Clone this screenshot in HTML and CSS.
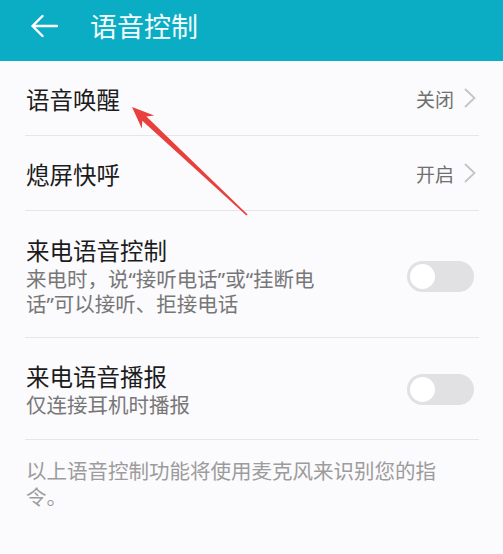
FILE: index.html
```html
<!DOCTYPE html>
<html lang="zh-CN">
<head>
<meta charset="utf-8">
<link rel="stylesheet" href="styles.css">
</head>
<body>
<header class="appbar">
  <svg class="back" width="28" height="24" viewBox="0 0 28 24"><path d="M27 12H2.5M12.5 2L2.5 12l10 10" fill="none" stroke="#fff" stroke-width="2.4" stroke-linecap="round" stroke-linejoin="round"/></svg>
  <h1 class="title">语音控制</h1>
</header>
<main class="list">
  <div class="row nav">
    <span class="label">语音唤醒</span>
    <span class="value">关闭</span>
    <svg class="chev" width="16" height="20" viewBox="0 0 16 20"><path d="M2 1l9.5 9L2 19" fill="none" stroke="#c4c4c4" stroke-width="1.8"/></svg>
  </div>
  <div class="row nav">
    <span class="label">熄屏快呼</span>
    <span class="value">开启</span>
    <svg class="chev" width="16" height="20" viewBox="0 0 16 20"><path d="M2 1l9.5 9L2 19" fill="none" stroke="#c4c4c4" stroke-width="1.8"/></svg>
  </div>
  <div class="row sw sw-tall">
    <div class="text">
      <div class="label">来电语音控制</div>
      <div class="sub">来电时，说“接听电话”或“挂断电话”可以接听、拒接电话</div>
    </div>
    <span class="toggle"><span class="knob"></span></span>
  </div>
  <div class="row sw">
    <div class="text">
      <div class="label">来电语音播报</div>
      <div class="sub">仅连接耳机时播报</div>
    </div>
    <span class="toggle"><span class="knob"></span></span>
  </div>
  <p class="note">以上语音控制功能将使用麦克风来识别您的指令。</p>
</main>
<svg class="arrow" width="503" height="554" viewBox="0 0 503 554">
  <polygon points="132,107 154.2,115.5 146.4,116.5 247.6,214.4 246.4,215.6 142.3,120.8 141.8,128.6" fill="#e8403c"/>
</svg>
</body>
</html>
```
FILE: styles.css
```css
html, body {
  margin: 0;
  padding: 0;
}
body {
  background: #fbfafd;
  font-family: "Noto Sans CJK SC", "Noto Sans", sans-serif;
  width: 503px;
  height: 554px;
  overflow: hidden;
  position: relative;
}
.appbar {
  height: 61px;
  background: #0badc4;
  display: flex;
  align-items: center;
  padding: 0 0 9px 30px;
  box-sizing: border-box;
}
.back {
  display: block;
  flex: none;
}
.title {
  margin: 0 0 0 32px;
  font-size: 27px;
  font-weight: 400;
  color: #f4fbfc;
  line-height: 32px;
}
.list {
  padding: 0 24px 0 25px;
}
.row {
  display: flex;
  align-items: center;
  border-bottom: 1px solid #e6e5e8;
  padding-left: 1px;
}
.row.nav {
  height: 75px;
  box-sizing: border-box;
}
.label {
  font-size: 23.5px;
  line-height: 30px;
  color: #1c1c1c;
}
.nav .label {
  flex: 1;
  padding-top: 2px;
}
.value {
  font-size: 19px;
  color: #707070;
  line-height: 24px;
  margin-right: 9px;
  padding-top: 1px;
}
.chev {
  display: block;
  margin-right: 0;
}
.row.sw {
  padding-top: 23px;
  padding-bottom: 21px;
}
.row.sw-tall {
  padding-top: 24px;
  padding-bottom: 20px;
}
.text {
  flex: 1;
}
.sub {
  width: 300px;
  margin-top: 2px;
  font-family: "Noto Sans", "Noto Sans CJK SC", sans-serif;
  font-size: 20.5px;
  line-height: 25px;
  color: #777;
}
.toggle {
  width: 67px;
  height: 31px;
  border-radius: 16px;
  background: #e1e1e3;
  margin-right: 5px;
  display: flex;
  align-items: center;
  padding-left: 3px;
  box-sizing: border-box;
  flex: none;
}
.knob {
  width: 25px;
  height: 25px;
  border-radius: 50%;
  background: #fff;
}
.note {
  margin: 0;
  padding: 17px 0 0 1px;
  width: 420px;
  font-size: 20.5px;
  line-height: 26px;
  color: #9c9c9c;
}
.arrow {
  position: absolute;
  left: 0;
  top: 0;
  pointer-events: none;
}
```
